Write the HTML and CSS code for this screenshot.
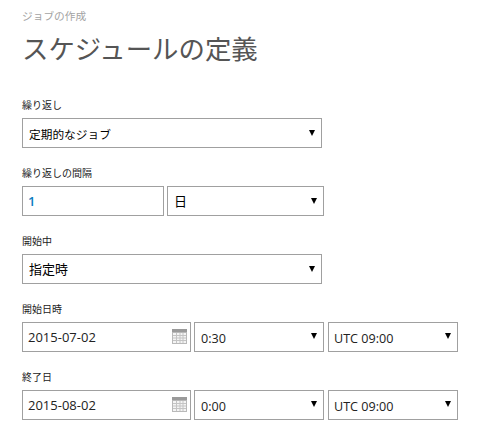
FILE: index.html
```html
<!DOCTYPE html>
<html lang="ja">
<head>
  <meta charset="UTF-8">
  <meta name="viewport" content="width=device-width, initial-scale=1">
  <title>スケジュールの定義</title>
  <link rel="stylesheet" href="styles.css">
</head>
<body>

  <div class="wizard">
    <div class="wizard-step">ジョブの作成</div>
    <h1>スケジュールの定義</h1>

    <!-- Recurrence -->
    <div class="field">
      <label>繰り返し</label>
      <div class="row">
        <div class="select w-300 narrow"><select><option>定期的なジョブ</option></select></div>
      </div>
    </div>

    <!-- Interval -->
    <div class="field">
      <label>繰り返しの間隔</label>
      <div class="row">
        <input class="text interval" type="text" value="1">
        <div class="select w-157"><select><option>日</option></select></div>
      </div>
    </div>

    <!-- Start -->
    <div class="field">
      <label>開始中</label>
      <div class="row">
        <div class="select w-300"><select><option>指定時</option></select></div>
      </div>
    </div>

    <!-- Start date -->
    <div class="field">
      <label>開始日時</label>
      <div class="row">
        <div class="date">
          <input class="text" type="text" value="2015-07-02">
          <svg class="cal" width="15" height="15" viewBox="0 0 15 15"><rect width="15" height="15" fill="#b9b9b9"/><rect width="15" height="3" fill="#9a9a9a"/><rect x="1" y="4" width="13" height="10" fill="#f4f4f4"/><path d="M1 6.5h13M1 9h13M1 11.5h13M4.5 4v10M8 4v10M11 4v10" stroke="#c4c4c4" stroke-width="1" fill="none"/></svg>
        </div>
        <div class="select w-130 small time"><select><option>0:30</option></select></div>
        <div class="select w-130 small tz"><select><option>UTC 09:00</option></select></div>
      </div>
    </div>

    <!-- End date -->
    <div class="field">
      <label>終了日</label>
      <div class="row">
        <div class="date">
          <input class="text" type="text" value="2015-08-02">
          <svg class="cal" width="15" height="15" viewBox="0 0 15 15"><rect width="15" height="15" fill="#b9b9b9"/><rect width="15" height="3" fill="#9a9a9a"/><rect x="1" y="4" width="13" height="10" fill="#f4f4f4"/><path d="M1 6.5h13M1 9h13M1 11.5h13M4.5 4v10M8 4v10M11 4v10" stroke="#c4c4c4" stroke-width="1" fill="none"/></svg>
        </div>
        <div class="select w-130 small time"><select><option>0:00</option></select></div>
        <div class="select w-130 small tz"><select><option>UTC 09:00</option></select></div>
      </div>
    </div>
  </div>

</body>
</html>
```

FILE: styles.css
```css
/* Basic Styles */
body {
  font-family: "Open Sans", "Noto Sans CJK JP", sans-serif;
  margin: 0;
  padding: 0;
  background-color: #fff;
  color: #000;
}
.wizard {
  padding: 9px 0 0 22px;
}
.wizard-step {
  font-size: 10.7px;
  line-height: 14px;
  color: #a3a3a3;
}
h1 {
  font-size: 26.4px;
  font-weight: 400;
  line-height: 36px;
  color: #555;
  margin: 8px 0 31px;
}
/* Fields */
.field {
  margin-bottom: 18px;
}
.field label {
  display: block;
  font-size: 10px;
  line-height: 14px;
  color: #222;
  margin-bottom: 6px;
}
.row {
  display: flex;
  height: 30px;
}
.text, .select select {
  box-sizing: border-box;
  width: 100%;
  height: 30px;
  border: 1px solid #a0a0a0;
  border-radius: 0;
  background: #fff;
  font-family: inherit;
  outline: none;
}
.text {
  font-size: 13px;
  color: #222;
  padding: 0 5px;
}
.interval {
  width: 142px;
  margin-right: 3px;
  font-weight: 600;
  color: #0a7cc1;
}
/* Selects with a small black arrow */
.select {
  position: relative;
}
.select select {
  appearance: none;
  -webkit-appearance: none;
  font-size: 13px;
  color: #000;
  padding: 0 20px 0 6px;
}
.select::after {
  content: "";
  position: absolute;
  right: 7px;
  top: 12px;
  border-left: 3px solid transparent;
  border-right: 3px solid transparent;
  border-top: 6px solid #000;
  pointer-events: none;
}
.w-300 { width: 300px; }
.w-157 { width: 157px; }
.w-130 { width: 130px; margin-left: 3px; }
.tz { margin-left: 4px; }
.narrow select {
  font-size: 11.7px;
  padding-top: 2px;
}
.small::after {
  top: 11px;
}
.small select {
  font-size: 12.6px;
  color: #222;
  padding: 2px 20px 0 5px;
}
.time select {
  padding-left: 6px;
}
/* Date input with calendar icon */
.date {
  position: relative;
  width: 169px;
}
.cal {
  position: absolute;
  right: 4px;
  top: 7px;
}
```
